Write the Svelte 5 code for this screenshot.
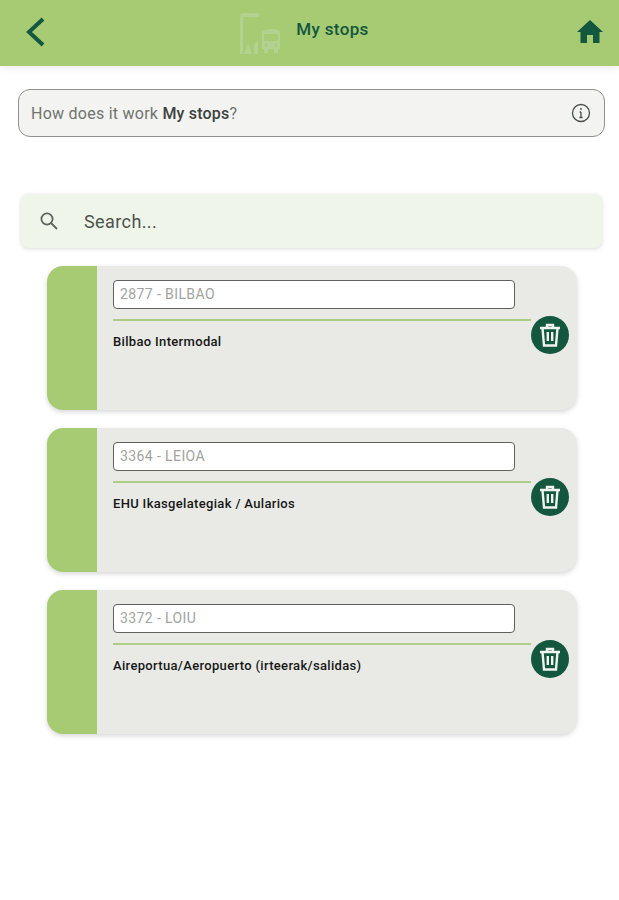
<script>
  const stops = [
    { code: '2877 - BILBAO', name: 'Bilbao Intermodal' },
    { code: '3364 - LEIOA', name: 'EHU Ikasgelategiak / Aularios' },
    { code: '3372 - LOIU', name: 'Aireportua/Aeropuerto (irteerak/salidas)' }
  ];
</script>

<div class="page">
  <header class="topbar">
    <button class="icon-btn back" aria-label="Back">
      <svg width="22" height="32" viewBox="0 0 22 32"><path d="M19 3 L5 16 L19 29" fill="none" stroke="#14573f" stroke-width="4"/></svg>
    </button>
    <div class="title-wrap">
      <svg class="title-icon" width="42" height="42" viewBox="0 0 42 42">
        <path d="M0 41 V3 Q0 0 3 0 H17 Q19 0 19 2 V4 H3 V41 Z" fill="#b3d292"/>
        <path d="M4 41 L8 30 L12 41 Z" fill="#b3d292"/>
        <path d="M14 41 V32 L18 26 V41 Z" fill="#b3d292"/>
        <path d="M22 20 Q22 16 31 16 Q40 16 40 20 V36 H38 V40 H34 V36 H28 V40 H24 V36 H22 Z" fill="#b3d292"/>
        <path d="M24 21 H38 V28 H24 Z" fill="#a6cb72"/>
        <circle cx="26" cy="32" r="1.5" fill="#a6cb72"/>
        <circle cx="36" cy="32" r="1.5" fill="#a6cb72"/>
      </svg>
      <span class="title">My stops</span>
    </div>
    <button class="icon-btn home" aria-label="Home">
      <svg width="26" height="26" viewBox="0 0 26 26"><path d="M13 2 L26 14 H22.5 V25 H16 V17 H10 V25 H3.5 V14 H0 Z" fill="#14573f"/></svg>
    </button>
  </header>

  <div class="help">
    <span>How does it work <b>My stops</b>?</span>
    <svg width="20" height="20" viewBox="0 0 20 20" fill="none" stroke="#4a4f4b" stroke-width="1.3">
      <circle cx="10" cy="10" r="8.5"/>
      <path d="M10 9 V14.5 M8.4 14.5 H11.6 M8.6 9 H10"/>
      <circle cx="10" cy="6" r="0.9" fill="#4a4f4b" stroke="none"/>
    </svg>
  </div>

  <div class="search">
    <svg width="20" height="20" viewBox="0 0 20 20" fill="none" stroke="#5d665f" stroke-width="1.8">
      <circle cx="8" cy="8" r="5.6"/>
      <path d="M12 12 L18 18"/>
    </svg>
    <span>Search...</span>
  </div>

  <ul class="stops">
    {#each stops as stop}
      <li class="card">
        <div class="band"></div>
        <div class="body">
          <div class="code">{stop.code}</div>
          <div class="rule"></div>
          <div class="name">{stop.name}</div>
        </div>
        <button class="trash" aria-label="Delete">
          <svg width="22" height="24" viewBox="0 0 22 24" fill="none" stroke="#f1f3ef" stroke-width="2.4">
            <path d="M1 5 H21 M8 4 V2 H14 V4"/>
            <path d="M3.5 5 L5 22.5 H17 L18.5 5"/>
            <path d="M8.8 9 V18 M13.2 9 V18"/>
          </svg>
        </button>
      </li>
    {/each}
  </ul>
</div>

<style>
  :global(body) {
    background: #fff;
  }

  .page {
    height: 900px;
    overflow: hidden;
    font-family: Roboto, "Liberation Sans", sans-serif;
  }

  .topbar {
    height: 66px;
    background: #a6cb72;
    box-shadow: 0 2px 8px rgba(0, 0, 0, 0.08);
    display: flex;
    align-items: center;
    justify-content: space-between;
    padding: 0 16px 0 24px;
  }

  .icon-btn {
    background: none;
    border: none;
    padding: 0;
    display: flex;
  }

  .back {
    margin-top: -3px;
  }

  .title-wrap {
    display: flex;
    align-items: center;
    gap: 14px;
    margin-right: 14px;
  }

  .title-icon {
    margin-top: 1px;
  }

  .title {
    font-size: 17px;
    font-weight: 500;
    letter-spacing: 0.35px;
    color: #14573f;
    margin-top: -8px;
  }

  .home {
    margin-top: -4px;
  }

  .help {
    margin: 23px 14px 0 18px;
    height: 46px;
    border: 1px solid #8e918d;
    border-radius: 12px;
    background: #f3f3f1;
    display: flex;
    align-items: center;
    justify-content: space-between;
    padding: 0 13px 0 12px;
    font-size: 16px;
    letter-spacing: 0.25px;
    color: #70746f;
  }

  .help b {
    font-weight: 500;
    letter-spacing: 0.2px;
    color: #3d423e;
  }

  .search {
    margin: 57px 17px 0 21px;
    height: 54px;
    border-radius: 8px;
    background: #eff5e9;
    box-shadow: 0 1px 4px rgba(0, 0, 0, 0.15);
    display: flex;
    align-items: center;
    gap: 25px;
    padding-left: 18px;
    font-size: 18px;
    letter-spacing: 0.4px;
    color: #4d524e;
  }

  .stops {
    list-style: none;
    margin: 18px 42px 0 47px;
    padding: 0;
    display: flex;
    flex-direction: column;
    gap: 18px;
  }

  .card {
    height: 144px;
    border-radius: 16px;
    background: #e9e9e6;
    box-shadow: 0 2px 5px rgba(0, 0, 0, 0.16);
    display: flex;
    overflow: hidden;
    position: relative;
  }

  .band {
    width: 50px;
    flex: none;
    background: #a6cb72;
  }

  .body {
    flex: 1;
    padding: 14px 47px 0 16px;
  }

  .code {
    width: 402px;
    height: 29px;
    box-sizing: border-box;
    border: 1px solid #5f625f;
    border-radius: 4px;
    background: #fff;
    padding-left: 6px;
    line-height: 26px;
    font-size: 14px;
    color: #a2a3a1;
    letter-spacing: 0.4px;
  }

  .rule {
    height: 2px;
    background: #aecd85;
    margin-top: 10px;
    width: 418px;
  }

  .name {
    margin-top: 13px;
    font-size: 13px;
    font-weight: 500;
    letter-spacing: 0.33px;
    color: #161816;
  }

  .trash {
    position: absolute;
    left: 484px;
    top: 50px;
    width: 38px;
    height: 38px;
    border-radius: 50%;
    border: none;
    padding: 0;
    background: #14573f;
    display: flex;
    align-items: center;
    justify-content: center;
  }
</style>
